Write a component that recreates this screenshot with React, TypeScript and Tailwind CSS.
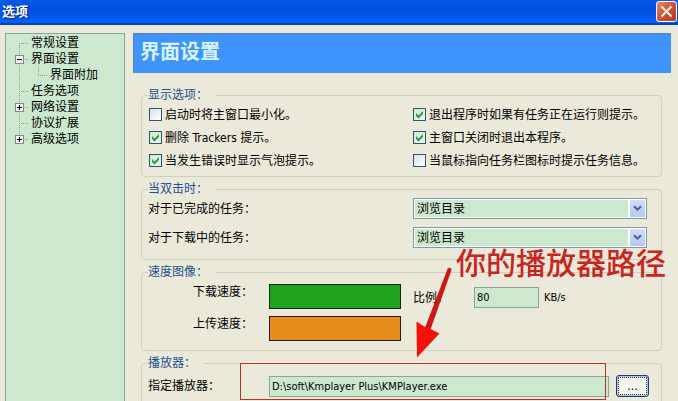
import React, { useState } from 'react';

const FONT = "font-['DejaVu_Sans_Condensed','Noto_Sans_CJK_SC',sans-serif]";

type TreeNode = {
    label: string;
    child?: boolean;
    toggle?: 'plus' | 'minus';
    first?: boolean;
    last?: boolean;
};

const TREE: TreeNode[] = [
    { label: '常规设置', first: true },
    { label: '界面设置', toggle: 'minus' },
    { label: '界面附加', child: true },
    { label: '任务选项' },
    { label: '网络设置', toggle: 'plus' },
    { label: '协议扩展' },
    { label: '高级选项', toggle: 'plus', last: true },
];

const TreeLines: React.FC<{ node: TreeNode }> = ({ node }) => {
    const width = node.child ? 44 : 25;
    return (
        <svg width={width} height="16" viewBox={`0 0 ${width} 16`} className="shrink-0" shapeRendering="crispEdges" aria-hidden="true">
            <g stroke="#8f9f94" strokeDasharray="1 1" fill="none">
                <path d={`M13.5 ${node.first ? 8 : 0}V${node.last ? 8 : 16}`} />
                {node.child ? <path d="M32.5 0V8M32 8.5H42" /> : <path d="M13 8.5H23" />}
            </g>
            {node.toggle && (
                <g>
                    <rect x="9.5" y="4.5" width="8" height="8" fill="#f4f6f0" stroke="#7d8f8c" />
                    <path d="M11 8.5H16" stroke="#000" />
                    {node.toggle === 'plus' && <path d="M13.5 6V11" stroke="#000" />}
                </g>
            )}
        </svg>
    );
};

const Group: React.FC<{ title: string; className: string; children: React.ReactNode }> = ({ title, className, children }) => (
    <fieldset className={`min-w-0 rounded border border-[#d0d0bf] px-[7px] ${className}`}>
        <legend className="-ml-px pr-2 leading-4 text-[#24508f]">{title}</legend>
        {children}
    </fieldset>
);

const Check: React.FC<{ label: string; checked?: boolean }> = ({ label, checked = false }) => (
    <label className="flex h-[23px] items-center gap-[3px] whitespace-nowrap">
        <span className="grid">
            <input
                type="checkbox"
                defaultChecked={checked}
                className="peer col-start-1 row-start-1 size-[13px] appearance-none border border-[#2f5570] bg-linear-to-br from-[#dcdfe0] to-white checked:from-[#cfe9d8] checked:to-[#e6f6e8]"
            />
            <svg viewBox="0 0 13 13" className="pointer-events-none invisible col-start-1 row-start-1 size-[13px] peer-checked:visible" aria-hidden="true">
                <path d="M3 5V8L5.5 10.5L10 6V3L5.5 7.5Z" fill="#3f9150" />
            </svg>
        </span>
        {label}
    </label>
);

const TaskSelect: React.FC<{ label: string; id: string }> = ({ label, id }) => (
    <div className="grid grid-cols-[264px_1fr] items-center pr-[7px]">
        <label htmlFor={id} className="-ml-px">{label}</label>
        <div className="relative flex h-[21px] border border-[#7f9aa4] bg-white p-px">
            <select id={id} className="min-w-0 flex-1 appearance-none bg-[#cce8cf] pr-5 pl-[2px] leading-4 outline-none">
                <option>浏览目录</option>
                <option>打开文件</option>
            </select>
            <span className="pointer-events-none absolute inset-y-px right-px flex w-[17px] items-center justify-center border-l-2 border-white bg-linear-to-b from-[#d2defb] to-[#b3c8f5]">
                <svg width="9" height="7" viewBox="0 0 9 7" aria-hidden="true">
                    <path d="M1 1.2L4.5 4.7L8 1.2" fill="none" stroke="#45608f" strokeWidth="2" />
                </svg>
            </span>
        </div>
    </div>
);

export default function App() {
    const [path, setPath] = useState('D:\\soft\\Kmplayer Plus\\KMPlayer.exe');
    const [ratio, setRatio] = useState('80');

    return (
        <div className={`flex h-screen flex-col overflow-hidden bg-[#ebe9d9] text-[12px] leading-4 text-black ${FONT}`}>
            <header className="flex h-[25px] shrink-0 items-center justify-between bg-linear-to-b from-[#0a5ae6] via-[#0052e2] via-30% to-[#0050d8] pr-px pl-[2px] shadow-[inset_0_-2px_1px_#0a3fae,inset_0_-8px_6px_#0064fb]">
                <h1 className="mb-[2px] text-[13px] font-bold text-white [text-shadow:1px_1px_1px_#0a1e7a]">选项</h1>
                <button
                    aria-label="关闭"
                    className="mb-[2px] flex size-[21px] items-center justify-center rounded-[3px] border border-white bg-linear-to-br from-[#dd8a74] via-[#cf5238] to-[#b8391d]"
                >
                    <svg width="13" height="13" viewBox="0 0 13 13" aria-hidden="true">
                        <path d="M1.5 1.5L11.5 11.5M11.5 1.5L1.5 11.5" stroke="#fff1e6" strokeWidth="2" />
                    </svg>
                </button>
            </header>

            <div className="flex min-h-0 flex-1 gap-2 pt-2 pr-[7px] pl-[5px]">
                <nav className="w-[120px] shrink-0 border border-b-0 border-[#8aa39d] bg-[#cce8cf] pt-px">
                    <ul>
                        {TREE.map((node) => (
                            <li key={node.label} className="flex h-4 items-center whitespace-nowrap">
                                <TreeLines node={node} />
                                {node.label}
                            </li>
                        ))}
                    </ul>
                </nav>

                <main className="relative min-w-0 flex-1">
                    <h2 className="flex h-10 items-center border-t border-l border-[#5b7fae] bg-[#3f94fd] pb-1 pl-[6px] text-[20px] font-bold text-[#d6f6ff]">
                        界面设置
                    </h2>

                    <form className="mt-[14px] mr-[9px] ml-2 flex flex-col gap-1">
                        <Group title="显示选项：" className="pb-1">
                            <div className="grid grid-cols-[264px_1fr]">
                                <Check label="启动时将主窗口最小化。" />
                                <Check label="退出程序时如果有任务正在运行则提示。" checked />
                                <Check label="删除 Trackers 提示。" checked />
                                <Check label="主窗口关闭时退出本程序。" checked />
                                <Check label="当发生错误时显示气泡提示。" checked />
                                <Check label="当鼠标指向任务栏图标时提示任务信息。" />
                            </div>
                        </Group>

                        <Group title="当双击时：" className="pb-[11px]">
                            <div className="flex flex-col gap-2 pt-px">
                                <TaskSelect id="done" label="对于已完成的任务：" />
                                <TaskSelect id="loading" label="对于下载中的任务：" />
                            </div>
                        </Group>

                        <Group title="速度图像：" className="pb-[9px]">
                            <div className="flex gap-3 pt-1">
                                <div className="grid grid-cols-[104px_132px] gap-x-4 gap-y-[7px]">
                                    <span className="text-right">下载速度：</span>
                                    <button type="button" aria-label="下载速度" className="h-[25px] border border-[#0c2a0c] bg-[#1fa31c]" />
                                    <span className="text-right">上传速度：</span>
                                    <button type="button" aria-label="上传速度" className="h-[25px] border border-[#2a1606] bg-[#e88b1d]" />
                                </div>
                                <div className="mt-[3px] flex h-[21px] items-center">
                                    <label htmlFor="ratio" className="w-[61px]">比例：</label>
                                    <input
                                        id="ratio"
                                        value={ratio}
                                        onChange={(e) => setRatio(e.target.value)}
                                        className="h-[21px] w-[65px] border border-[#8aa39d] bg-[#cce8cf] px-[2px] text-[11px] outline-none"
                                    />
                                    <span className="ml-[5px] text-[11px]">KB/s</span>
                                </div>
                            </div>
                        </Group>

                        <Group title="播放器：" className="pb-4">
                            <div className="flex items-center pt-1 pr-[5px]">
                                <label htmlFor="player" className="-ml-px w-[121px]">指定播放器：</label>
                                <div className="relative flex min-w-0 flex-1">
                                    <input
                                        id="player"
                                        value={path}
                                        onChange={(e) => setPath(e.target.value)}
                                        className="h-[21px] w-full border border-[#8aa39d] bg-[#cce8cf] px-[2px] text-[11px] outline-none"
                                    />
                                    <span className="pointer-events-none absolute -top-[13px] right-[3px] -bottom-[3px] -left-[29px] border border-[#b8322a]" />
                                </div>
                                <button
                                    type="button"
                                    className="ml-[7px] h-[22px] w-[33px] rounded-[3px] border border-[#1f3c6e] bg-[#f6f5ef] p-px shadow-[inset_0_0_0_1px_#a9c3ee]"
                                >
                                    <span className="flex h-full items-center justify-center border border-dotted border-[#333] leading-none">...</span>
                                </button>
                            </div>
                        </Group>
                    </form>

                    <div className="pointer-events-none absolute top-[211px] left-[323px] text-[30px] leading-10 font-medium whitespace-nowrap text-[#c9241e]">
                        你的播放器路径
                    </div>
                    <svg width="40" height="94" viewBox="0 0 40 94" className="pointer-events-none absolute top-[232px] left-[282px]" aria-hidden="true">
                        <path d="M32.500 4Q34.500 1.500 36.500 4L36 6.500L15 66L9.500 64Z" fill="#cb1a15" />
                        <path d="M2 92.500L1.500 56.500L10 62L15.500 64L24.500 68.500Z" fill="#f8100a" />
                    </svg>
                </main>
            </div>
        </div>
    );
}
